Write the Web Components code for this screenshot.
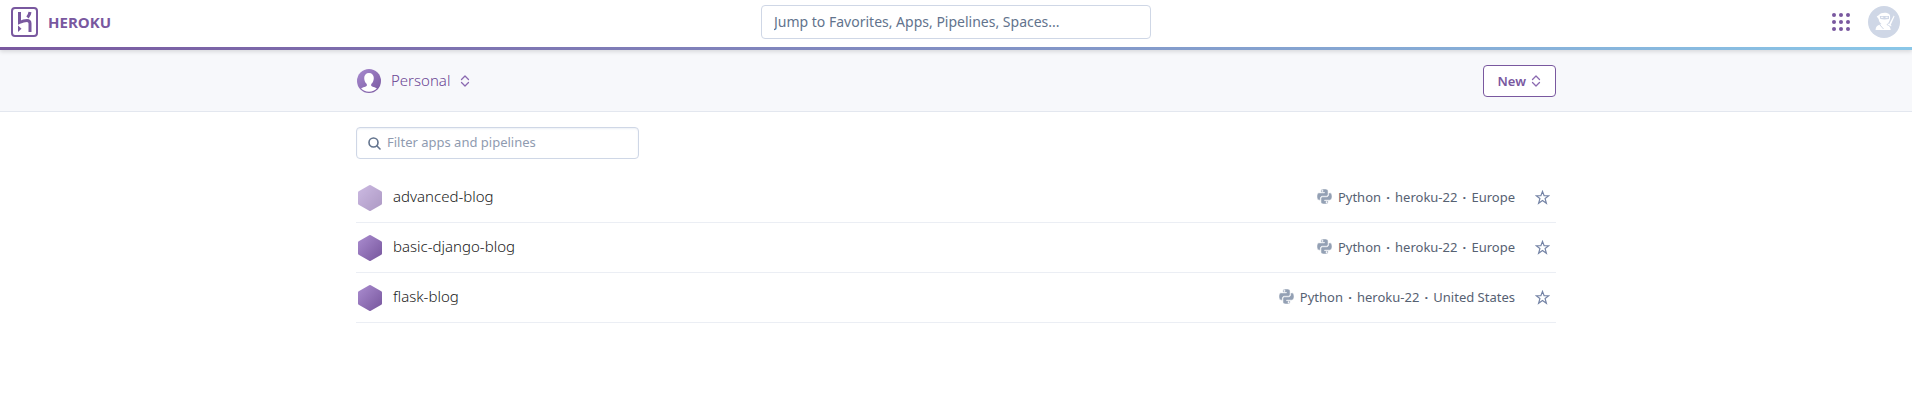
<!DOCTYPE html>
<html lang="en">
<head>
<meta charset="utf-8">
<title>Personal apps | Heroku</title>
<style>
  body {
    margin: 0;
    background: #fff;
    color: #3f3f44;
    font: 400 13px/20px "Noto Sans", "Open Sans", sans-serif;
    --purple: #79589f;
    --line: #cfd7e6;
    --muted: #62738d;
  }
</style>
</head>
<body>
<dashboard-app></dashboard-app>

<template id="top-nav">
  <style>
    :host { display: block; position: relative; background: #fff; box-shadow: 0 2px 4px rgba(0, 0, 0, .12); }
    nav { display: grid; grid-template-columns: 1fr 390px 1fr; align-items: center; height: 47px; padding: 0 11px; box-sizing: border-box; }
    .bar { height: 3px; background: linear-gradient(to right, #79589f, #8ac7e8); }
    .brand { display: flex; align-items: center; gap: 10px; justify-self: start; margin-bottom: 3px; color: var(--purple); text-decoration: none; font: 700 15px/30px "Open Sans", sans-serif; }
    .brand svg { display: block; }
    .search { box-sizing: border-box; width: 100%; height: 34px; margin: 0 0 4px; padding: 0 12px; border: 1px solid var(--line); border-radius: 4px; font: 400 14px/20px "Noto Sans", sans-serif; color: #3f3f44; outline: 0; }
    .search::placeholder { color: var(--muted); opacity: 1; }
    .tools { display: flex; align-items: center; justify-self: end; gap: 16px; margin-bottom: 3px; padding-right: 1px; }
    .tools button { display: block; padding: 0; border: 0; background: none; }
    .tools svg { display: block; }
  </style>
  <nav aria-label="Main">
    <a class="brand" href="#">
      <svg width="27" height="30" viewBox="0 0 27 30" aria-hidden="true"><rect x="1" y="1" width="25" height="28" rx="3" fill="none" stroke="#79589f" stroke-width="2"/><path d="M8.500 5v10.500c3-1.400 5.500-2 7.500-2 2.500 0 3 1.300 3 3V25M19 5c-.2 2-1 3.700-2.500 5.500" fill="none" stroke="#79589f" stroke-width="3"/><path d="M7 18.500v6.500l3.500-3.200z" fill="#79589f"/></svg>
      <span>HEROKU</span>
    </a>
    <input class="search" type="text" aria-label="Jump to" placeholder="Jump to Favorites, Apps, Pipelines, Spaces...">
    <div class="tools">
      <button aria-label="Heroku products"><svg width="22" height="22" viewBox="0 0 22 22" fill="#79589f"><circle cx="4" cy="4" r="2"/><circle cx="11" cy="4" r="2"/><circle cx="18" cy="4" r="2"/><circle cx="4" cy="11" r="2"/><circle cx="11" cy="11" r="2"/><circle cx="18" cy="11" r="2"/><circle cx="4" cy="18" r="2"/><circle cx="11" cy="18" r="2"/><circle cx="18" cy="18" r="2"/></svg></button>
      <button aria-label="Account"><svg width="32" height="32" viewBox="0 0 32 32"><circle cx="16" cy="16" r="16" fill="#cfd7e6"/><path d="M11 9c1.500-2.800 8.500-3.300 10.500-.5 1.200 2 .6 6.500-1.200 8.400-.8.900-1.600 1.100-1.800 2.100 2 .6 3.800 1.200 4.200 5H7.500c.3-3.500 1.800-4.600 4.500-5.200l1.500-.8c-1.600-1-2.600-3-2.900-5L8.700 10.500z" fill="#fff"/><path d="M11.800 10h9.200v3l-4.500.4-4.200-.4z" fill="#cfd7e6"/><path d="M13 11.300h2.300M17.500 11.300h2.300" stroke="#fff"/><path d="M12 19l3.500 4" stroke="#cfd7e6"/><path d="M25.800 9.500l.7 1-3.800 8.500-1.600-.8zM20 17.500l3.500 2-.4.900-3.500-2z" fill="#fff"/></svg></button>
    </div>
  </nav>
  <div class="bar"></div>
</template>

<template id="sort-arrows">
  <style>:host { display: block; width: 10px; height: 12px; } svg { display: block; }</style>
  <svg width="10" height="12" viewBox="0 0 10 12" fill="none" stroke="#8a68b0" stroke-width="1.300" stroke-linejoin="round" stroke-linecap="round" aria-hidden="true"><path d="M1.500 4.500L5 1l3.500 3.500M1.500 7.500L5 11l3.500-3.500"/></svg>
</template>

<template id="context-bar">
  <style>
    :host { display: block; background: #f7f8fb; border-bottom: 1px solid #e3e7ef; }
    .inner { display: flex; align-items: center; justify-content: space-between; max-width: 1200px; height: 61px; margin: 0 auto; }
    button { display: flex; align-items: center; box-sizing: border-box; margin: 0; color: var(--purple); }
    .account { gap: 10px; padding: 0 0 0 1px; border: 0; background: none; color: #6a4593; font: 300 15px/24px "Noto Sans", sans-serif; }
    .account span { padding-bottom: 2px; }
    .account svg { display: block; }
    .new { gap: 5px; height: 32px; padding: 0 14px; border: 1px solid var(--purple); border-radius: 4px; background: #fff; font: 600 13px/20px "Noto Sans", sans-serif; }
  </style>
  <div class="inner">
    <button class="account">
      <svg width="24" height="24" viewBox="0 0 24 24" aria-hidden="true"><defs><linearGradient id="g" x1="0" y1="0" x2="1" y2="1"><stop stop-color="#a88bd0"/><stop offset="1" stop-color="#79589f"/></linearGradient></defs><circle cx="12" cy="12" r="12" fill="url(#g)"/><path d="M12 4c-3 0-4.800 2-4.800 5 0 2.600 1 4.800 2.600 6v1.700c0 .9-4.600 1.300-5.600 2.900 1.700 2 4.400 3.200 7.800 3.200s6.100-1.200 7.800-3.200c-1-1.600-5.600-2-5.600-2.900V15c1.600-1.200 2.600-3.400 2.600-6 0-3-1.800-5-4.800-5z" fill="#fff"/></svg>
      <span>Personal</span>
      <sort-arrows></sort-arrows>
    </button>
    <button class="new"><span>New</span><sort-arrows></sort-arrows></button>
  </div>
</template>

<template id="app-filter">
  <style>
    :host { display: block; width: 283px; }
    label { display: flex; align-items: center; gap: 6px; box-sizing: border-box; height: 32px; padding: 0 11px; border: 1px solid var(--line); border-radius: 4px; background: #fff; box-shadow: inset 0 1px 2px #edf0f6; }
    svg { flex: none; }
    input { flex: 1; min-width: 0; padding: 0 0 2px; border: 0; outline: 0; background: none; color: #3f3f44; font: 400 13px/20px "Noto Sans", sans-serif; }
    input::placeholder { color: #8f9bb0; opacity: 1; }
  </style>
  <label><svg width="13" height="13" viewBox="0 0 13 13" fill="none" stroke="#62738d" stroke-width="1.600" stroke-linecap="round" aria-hidden="true"><circle cx="5.500" cy="5.500" r="4.500"/><path d="M9 9l3 3"/></svg>
    <input type="text" aria-label="Filter apps and pipelines" placeholder="Filter apps and pipelines"></label>
</template>

<template id="app-row">
  <style>
    :host { display: flex; align-items: center; box-sizing: border-box; height: 50px; border-bottom: 1px solid #ebeef4; }
    .hex { flex: none; margin: 0 10px 0 1px; }
    :host([asleep]) .hex { opacity: .6; }
    .name { padding-bottom: 3px; color: #1c1c22; text-decoration: none; font: 300 15px/24px "Noto Sans", sans-serif; }
    .meta { display: flex; align-items: center; margin-left: auto; padding-bottom: 2px; color: #566172; }
    .meta svg { margin-right: 6px; }
    .dot { width: 14px; text-align: center; font-weight: 700; }
    button { display: block; margin: 0 6px 0 20px; padding: 0; border: 0; background: none; }
    button svg, .meta svg { display: block; }
  </style>
  <svg class="hex" width="26" height="26" viewBox="0 0 26 26" aria-hidden="true"><defs><linearGradient id="h" x1="0" y1="0" x2="1" y2="1"><stop stop-color="#ab8dd0"/><stop offset="1" stop-color="#76559c"/></linearGradient></defs><path d="M12.200.3a1.500 1.500 0 0 1 1.600 0l10.500 6q.7.400.7 1.200v11q0 .8-.7 1.200l-10.500 6a1.500 1.500 0 0 1-1.600 0l-10.500-6Q1 19.300 1 18.500v-11q0-.8.700-1.200z" fill="url(#h)"/></svg>
  <a class="name" href="#"><slot></slot></a>
  <div class="meta">
    <svg width="15" height="15" viewBox="0 0 24 24" fill="#93a0b4" stroke="#fff" stroke-width=".8" aria-hidden="true"><path d="M11.900 0C5.800 0 6.200 2.600 6.200 2.600v2.800H12v.8H3.900S0 5.800 0 11.900s3.400 5.900 3.400 5.900h2v-2.900s-.1-3.400 3.300-3.400h5.800s3.200.1 3.200-3.100V3.200S18.200 0 11.900 0zM8.700 1.800a1.100 1.100 0 1 1 0 2.200 1.100 1.100 0 0 1 0-2.200z"/><path d="M12.100 24c6.100 0 5.700-2.600 5.700-2.600v-2.800H12v-.8h8.100s3.900.4 3.900-5.700-3.400-5.900-3.400-5.900h-2v2.900s.1 3.400-3.300 3.400H9.500s-3.200-.1-3.200 3.100v5.200S5.800 24 12.100 24zm3.200-1.800a1.100 1.100 0 1 1 0-2.200 1.100 1.100 0 0 1 0 2.200z"/></svg>
    <span>Python</span><span class="dot">·</span><slot name="stack"></slot><span class="dot">·</span><slot name="region"></slot>
  </div>
  <button aria-label="Favorite"><svg width="15" height="15" viewBox="0 0 15 15" fill="none" stroke="#7483a5" stroke-width="1.200"><path d="M7.500 1.400l1.600 4.200 4.700.1-3.700 2.900 1.300 4.700-3.900-2.700-3.900 2.700 1.300-4.700L1.200 5.700l4.700-.1z"/></svg></button>
</template>

<template id="dashboard-app">
  <style>
    :host { display: block; }
    main { max-width: 1200px; margin: 0 auto; padding-top: 15px; }
    section { padding-top: 14px; }
  </style>
  <top-nav></top-nav>
  <context-bar></context-bar>
  <main>
    <app-filter></app-filter>
    <section aria-label="Apps">
      <app-row asleep>advanced-blog<span slot="stack">heroku-22</span><span slot="region">Europe</span></app-row>
      <app-row>basic-django-blog<span slot="stack">heroku-22</span><span slot="region">Europe</span></app-row>
      <app-row>flask-blog<span slot="stack">heroku-22</span><span slot="region">United States</span></app-row>
    </section>
  </main>
</template>

<script>
  for (const name of ['sort-arrows', 'top-nav', 'context-bar', 'app-filter', 'app-row', 'dashboard-app']) {
    const template = document.getElementById(name);
    customElements.define(name, class extends HTMLElement {
      constructor() {
        super();
        this.attachShadow({ mode: 'open' }).append(template.content.cloneNode(true));
      }
    });
  }
</script>
</body>
</html>
